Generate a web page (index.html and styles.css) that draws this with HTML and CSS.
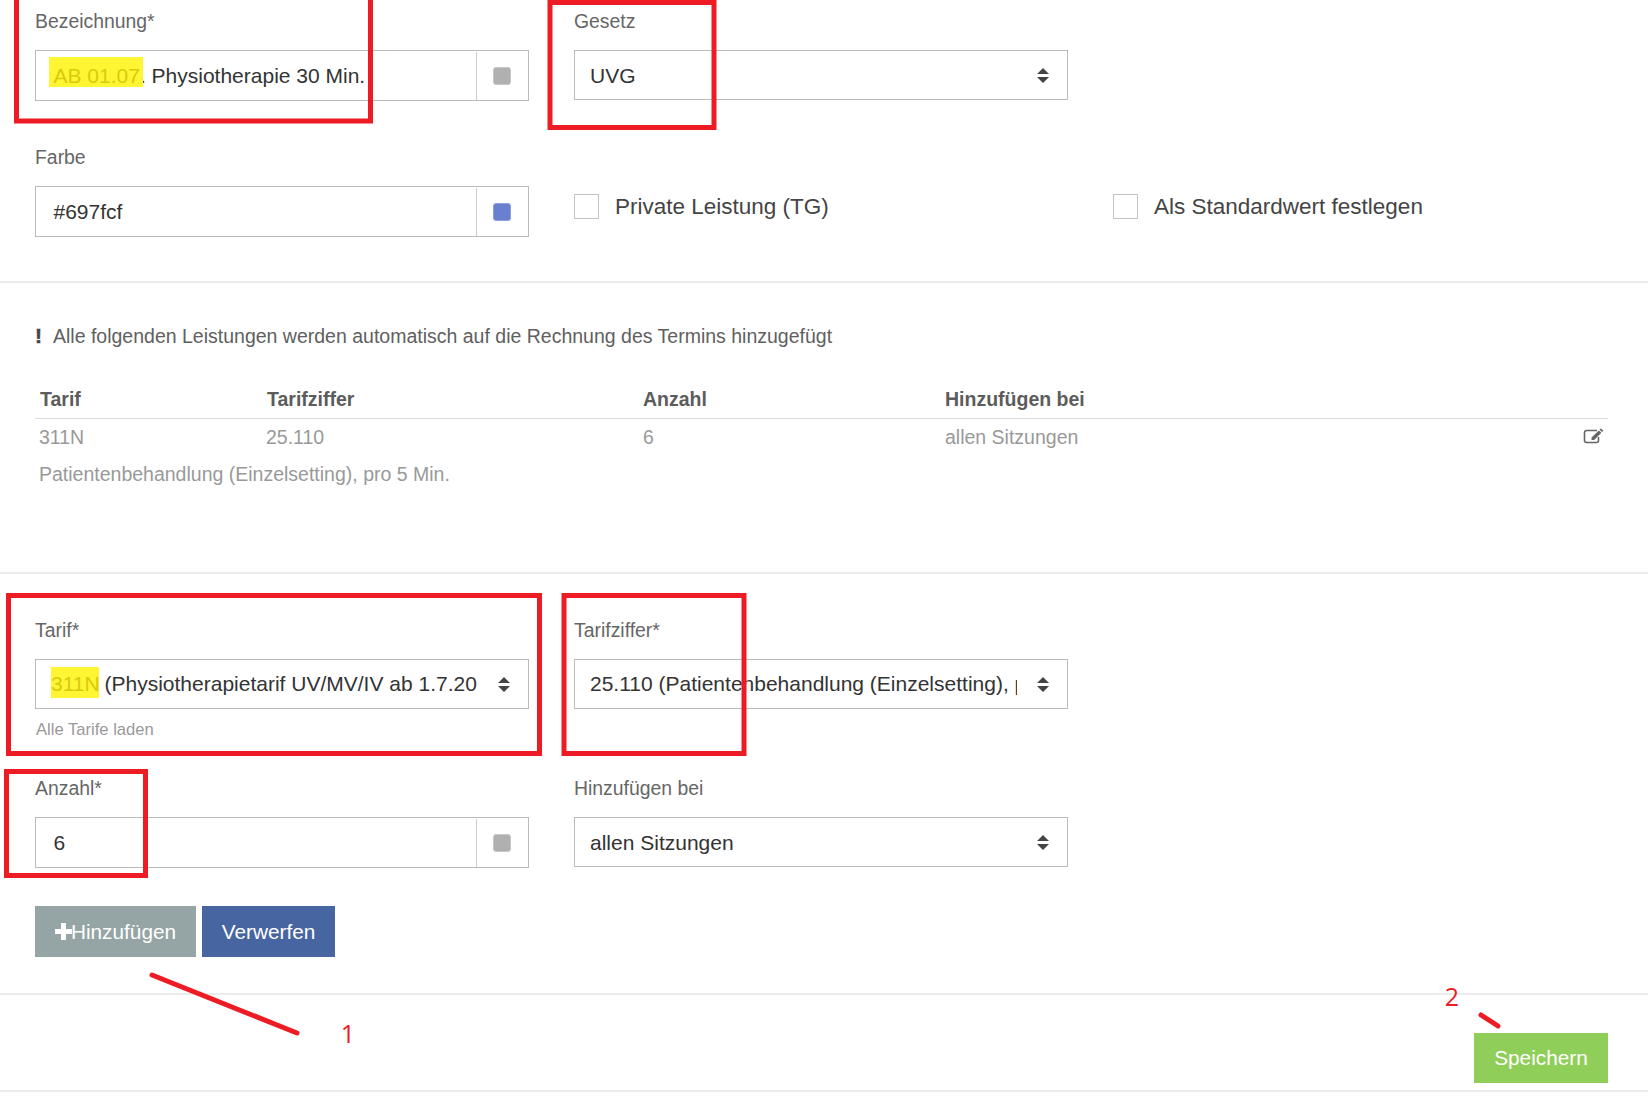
FILE: index.html
```html
<!DOCTYPE html>
<html lang="de">
<head>
<meta charset="utf-8">
<title>Leistung</title>
<link rel="stylesheet" href="styles.css">
</head>
<body>
<main class="page">
  <section class="sec sec-top">
    <div class="grid">
      <div class="field">
        <div class="label">Bezeichnung*</div>
        <div class="control input"><div class="value"><span class="mark mark-a">AB 01.07</span>. Physiotherapie 30 Min.</div><div class="addon"><i class="swatch"></i></div></div>
      </div>
      <div class="field">
        <div class="label">Gesetz</div>
        <div class="control select select-low"><div class="value">UVG</div><svg class="arrows" viewBox="0 0 12 15"><path d="M6 0l6 6H0zM6 15L0 9h12z"/></svg></div>
      </div>
      <div></div>
      <div class="field">
        <div class="label">Farbe</div>
        <div class="control input"><div class="value">#697fcf</div><div class="addon"><i class="swatch swatch-blue"></i></div></div>
      </div>
      <div class="check"><i class="box"></i><span>Private Leistung (TG)</span></div>
      <div class="check"><i class="box"></i><span>Als Standardwert festlegen</span></div>
    </div>
  </section>

  <section class="sec sec-table">
    <p class="notice"><b class="bang">!</b>Alle folgenden Leistungen werden automatisch auf die Rechnung des Termins hinzugefügt</p>
    <div class="thead">
      <div>Tarif</div><div>Tarifziffer</div><div>Anzahl</div><div>Hinzufügen bei</div>
    </div>
    <div class="trow">
      <div>311N</div><div>25.110</div><div>6</div><div>allen Sitzungen</div>
      <svg class="edit" viewBox="0 0 21 16"><path class="edit-box" d="M14 2.500H3.500a2 2 0 0 0-2 2v8a2 2 0 0 0 2 2h10a2 2 0 0 0 2-2V9"/><path class="edit-pen" d="M17.800.4l2.600 2.400-1.300 1.300-2.600-2.400zM15.800 2.400l2.600 2.400-7.200 7.100H8.500V9.400z"/></svg>
    </div>
    <div class="tdesc">Patientenbehandlung (Einzelsetting), pro 5 Min.</div>
  </section>

  <section class="sec sec-form">
    <div class="grid grid-two">
      <div class="field">
        <div class="label">Tarif*</div>
        <div class="control select"><div class="value"><span class="mark mark-b">311N</span> (Physiotherapietarif UV/MV/IV ab 1.7.2017)</div><svg class="arrows" viewBox="0 0 12 15"><path d="M6 0l6 6H0zM6 15L0 9h12z"/></svg></div>
        <div class="hint">Alle Tarife laden</div>
      </div>
      <div class="field">
        <div class="label">Tarifziffer*</div>
        <div class="control select"><div class="value">25.110 (Patientenbehandlung (Einzelsetting), pro 5 Min.)</div><svg class="arrows" viewBox="0 0 12 15"><path d="M6 0l6 6H0zM6 15L0 9h12z"/></svg></div>
      </div>
      <div class="field">
        <div class="label">Anzahl*</div>
        <div class="control input"><div class="value">6</div><div class="addon"><i class="swatch"></i></div></div>
      </div>
      <div class="field">
        <div class="label">Hinzufügen bei</div>
        <div class="control select select-low"><div class="value">allen Sitzungen</div><svg class="arrows" viewBox="0 0 12 15"><path d="M6 0l6 6H0zM6 15L0 9h12z"/></svg></div>
      </div>
    </div>
    <div class="actions">
      <button class="btn btn-grey"><svg class="plus" viewBox="0 0 17 17"><path d="M6 0h5v6h6v5h-6v6H6v-6H0V6h6z"/></svg>Hinzufügen</button>
      <button class="btn btn-blue">Verwerfen</button>
    </div>
  </section>

  <section class="sec sec-foot">
    <button class="btn btn-green">Speichern</button>
  </section>
</main>

<svg class="notes" viewBox="0 0 1648 1102">
  <rect class="note-box" x="16.500" y="-3" width="354" height="124"/>
  <rect class="note-box" x="550" y="2.500" width="164" height="125"/>
  <rect class="note-box" x="8.500" y="595.500" width="531" height="158"/>
  <rect class="note-box" x="564" y="595.500" width="180" height="158"/>
  <rect class="note-box" x="6.500" y="771.500" width="139" height="104"/>
  <path class="note-line" d="M152 975L297 1033"/>
  <path class="note-line" d="M1481 1015L1498 1026"/>
  <text class="note-num" x="348" y="1043">1</text>
  <text class="note-num" x="1452" y="1006">2</text>
</svg>
</body>
</html>
```

FILE: styles.css
```css
* { box-sizing: border-box; }
html, body { margin: 0; padding: 0; background: #fff; }
body { font-family: "Liberation Sans", Arial, sans-serif; color: #333; height: 1102px; overflow: hidden; position: relative; }

.sec { padding: 0 40px 0 35px; border-bottom: 2px solid #ececec; }
.sec-top { padding-top: 10px; height: 283px; }
.sec-table { padding-top: 42px; height: 291px; }
.sec-form { padding-top: 45px; height: 421px; }
.sec-foot { height: 97px; padding-top: 38px; display: flex; justify-content: flex-end; }

.grid { display: grid; grid-template-columns: repeat(3, 494px); column-gap: 45px; row-gap: 45px; }
.grid-two { grid-template-columns: repeat(2, 494px); row-gap: 0; }
.grid-two .field { min-height: 158px; }
.grid-two .field:nth-child(n+3) { min-height: 0; }

.label { font-size: 19.400px; line-height: 22px; color: #666; margin-bottom: 18px; }
.control { display: flex; align-items: center; border: 1.500px solid #bbb; background: #fff; font-size: 21px; color: #333; }
.input { height: 51px; }
.select { height: 50px; padding: 0 18px 0 15px; }
.value { line-height: 38px; white-space: nowrap; overflow: hidden; flex: 1; }
.input .value { padding-left: 17.500px; }
.select .value { margin-right: 20.500px; }
.select-low .value { padding-top: 1px; }
.addon { width: 52px; align-self: stretch; margin-top: 1px; border-left: 1.500px solid #ccc; display: flex; align-items: center; justify-content: center; padding-right: 1px; }
.swatch { width: 18px; height: 18px; border-radius: 3px; background: #b0b0b0; border: 1px solid #c4c8cc; }
.swatch-blue { background: #697fcf; border-color: #8d9fdc; }
.arrows { width: 12px; height: 15px; fill: #444; flex: none; }

.mark { display: inline-block; position: relative; z-index: 0; line-height: 22px; color: #d9ca0e; }
.mark::before { content: ""; position: absolute; z-index: -1; background: #fff533; }
.mark-a::before { left: -4.500px; right: -3px; top: -8px; height: 30px; }
.mark-b::before { left: 0; right: 1px; top: -6px; height: 31px; }
.mark-b { margin-right: -1px; }

.check { display: flex; align-items: center; gap: 16px; font-size: 22.500px; color: #444; height: 25px; margin-top: 48px; }
.box { width: 25px; height: 25px; border: 1.500px solid #c4c4c4; background: #fff; flex: none; }

.notice { margin: 0; font-size: 19.500px; line-height: 22px; color: #606060; display: flex; }
.bang { width: 18px; font-size: 21px; font-weight: 900; -webkit-text-stroke: 0.5px #444; color: #444; }

.thead, .trow { display: grid; position: relative; }
.thead { grid-template-columns: 227px 376px 302px 1fr; margin-top: 41px; height: 31px; padding-left: 5px; font-size: 19.500px; line-height: 22px; font-weight: bold; color: #5c5c5c; border-bottom: 1.500px solid #ddd; }
.trow { grid-template-columns: 227px 377px 302px 1fr; padding: 7px 0 0 4px; font-size: 19.500px; line-height: 22px; color: #999; }
.edit { position: absolute; right: 4px; top: 9px; width: 21px; height: 16px; }
.edit-box { fill: none; stroke: #666; stroke-width: 1.600; }
.edit-pen { fill: #666; }
.tdesc { padding: 15px 0 0 4px; font-size: 19.500px; line-height: 22px; color: #999; }

.hint { margin: 10px 0 0 1px; font-size: 16.600px; line-height: 22px; color: #999; }

.actions { display: flex; gap: 6px; margin-top: 38px; }
.btn { border: 0; height: 51px; padding: 0; font: 20.800px "Liberation Sans", Arial, sans-serif; color: #fff; display: flex; align-items: center; justify-content: center; }
.btn-grey { width: 161px; background: #95a5a5; }
.btn-blue { width: 133px; background: #4765a0; }
.btn-green { width: 134px; height: 50px; background: #8fce58; }
.plus { width: 17px; height: 17px; fill: #fff; margin-right: -1px; }

.notes { position: absolute; left: 0; top: 0; width: 1648px; height: 1102px; pointer-events: none; }
.note-box { fill: none; stroke: #ed1c24; stroke-width: 5; }
.note-line { fill: none; stroke: #ed1c24; stroke-width: 5; stroke-linecap: round; }
.note-num { fill: #ed1c24; font-family: "Open Sans", sans-serif; font-size: 25px; text-anchor: middle; }
```
